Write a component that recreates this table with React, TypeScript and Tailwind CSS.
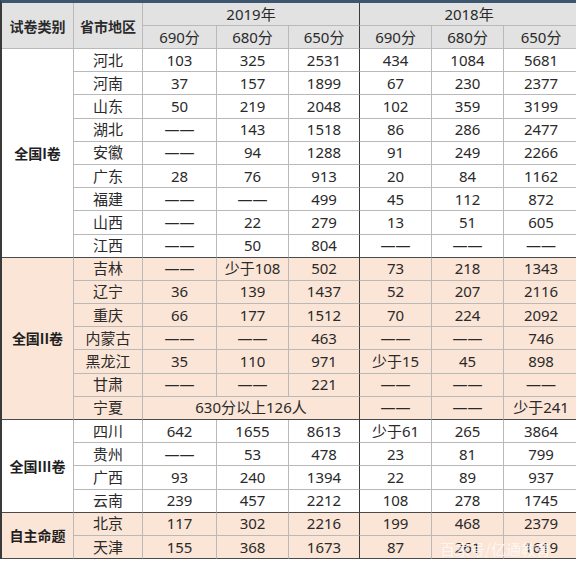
const DASH = "——";

type Row = { region: string; cells: string[]; span?: string };
type Section = { label: string; peach: boolean; rows: Row[] };

const sections: Section[] = [
  {
    label: "全国I卷",
    peach: false,
    rows: [
      { region: "河北", cells: ["103", "325", "2531", "434", "1084", "5681"] },
      { region: "河南", cells: ["37", "157", "1899", "67", "230", "2377"] },
      { region: "山东", cells: ["50", "219", "2048", "102", "359", "3199"] },
      { region: "湖北", cells: [DASH, "143", "1518", "86", "286", "2477"] },
      { region: "安徽", cells: [DASH, "94", "1288", "91", "249", "2266"] },
      { region: "广东", cells: ["28", "76", "913", "20", "84", "1162"] },
      { region: "福建", cells: [DASH, DASH, "499", "45", "112", "872"] },
      { region: "山西", cells: [DASH, "22", "279", "13", "51", "605"] },
      { region: "江西", cells: [DASH, "50", "804", DASH, DASH, DASH] },
    ],
  },
  {
    label: "全国II卷",
    peach: true,
    rows: [
      { region: "吉林", cells: [DASH, "少于108", "502", "73", "218", "1343"] },
      { region: "辽宁", cells: ["36", "139", "1437", "52", "207", "2116"] },
      { region: "重庆", cells: ["66", "177", "1512", "70", "224", "2092"] },
      { region: "内蒙古", cells: [DASH, DASH, "463", DASH, DASH, "746"] },
      { region: "黑龙江", cells: ["35", "110", "971", "少于15", "45", "898"] },
      { region: "甘肃", cells: [DASH, DASH, "221", DASH, DASH, DASH] },
      { region: "宁夏", span: "630分以上126人", cells: [DASH, DASH, "少于241"] },
    ],
  },
  {
    label: "全国III卷",
    peach: false,
    rows: [
      { region: "四川", cells: ["642", "1655", "8613", "少于61", "265", "3864"] },
      { region: "贵州", cells: [DASH, "53", "478", "23", "81", "799"] },
      { region: "广西", cells: ["93", "240", "1394", "22", "89", "937"] },
      { region: "云南", cells: ["239", "457", "2212", "108", "278", "1745"] },
    ],
  },
  {
    label: "自主命题",
    peach: true,
    rows: [
      { region: "北京", cells: ["117", "302", "2216", "199", "468", "2379"] },
      { region: "天津", cells: ["155", "368", "1673", "87", "261", "1619"] },
    ],
  },
];

const widths = [72, 69, 74, 72, 71, 72, 72, 74];
const cell = "border-r border-b border-[#b9b9b9] text-center align-middle p-0 whitespace-nowrap";

export default function App() {
  return (
    <div className="relative w-[576px] h-[563px] bg-white overflow-hidden text-[#2a2a2a] [font-family:'Noto_Sans','Noto_Sans_CJK_SC',sans-serif] text-[15px] leading-none">
      <table className="table-fixed border-separate border-spacing-0 w-[576px] border-t-[3px] border-t-[#3d5670] border-l-2 border-l-[#3a3a3a]">
        <colgroup>
          {widths.map((w, i) => (
            <col key={i} style={{ width: w }} />
          ))}
        </colgroup>
        <thead>
          <tr className="h-[23px] bg-[#e2e2e2]">
            <th rowSpan={2} className={`${cell} font-bold text-[14px] [font-family:'Noto_Sans_CJK_SC',sans-serif]`}>
              试卷类别
            </th>
            <th rowSpan={2} className={`${cell} font-bold text-[14px] [font-family:'Noto_Sans_CJK_SC',sans-serif]`}>
              省市地区
            </th>
            <th colSpan={3} className={`${cell} font-normal border-r-[#3a3a3a]`}>
              2019年
            </th>
            <th colSpan={3} className={`${cell} font-normal border-r-0`}>
              2018年
            </th>
          </tr>
          <tr className="h-[23px] bg-[#e2e2e2]">
            <th className={`${cell} font-normal`}>690分</th>
            <th className={`${cell} font-normal`}>680分</th>
            <th className={`${cell} font-normal border-r-[#3a3a3a]`}>650分</th>
            <th className={`${cell} font-normal`}>690分</th>
            <th className={`${cell} font-normal`}>680分</th>
            <th className={`${cell} font-normal border-r-0`}>650分</th>
          </tr>
        </thead>
        <tbody>
          {sections.map((s) =>
            s.rows.map((r, i) => {
              const last = i === s.rows.length - 1;
              const bottom = last ? "border-b-[#4a4a4a]" : "";
              return (
                <tr key={r.region} className={`h-[23.2px] ${s.peach ? "bg-[#fbe5d7]" : "bg-white"}`}>
                  {i === 0 && (
                    <td
                      rowSpan={s.rows.length}
                      className={`${cell} border-b-[#4a4a4a] font-bold text-[14px] text-[#1f1f1f] [font-family:'Noto_Sans_CJK_SC',sans-serif]`}
                    >
                      {s.label}
                    </td>
                  )}
                  <td className={`${cell} ${bottom}`}>{r.region}</td>
                  {r.span && (
                    <td colSpan={3} className={`${cell} ${bottom} border-r-[#3a3a3a]`}>
                      {r.span}
                    </td>
                  )}
                  {r.cells.map((c, j) => {
                    const col = r.span ? j + 3 : j;
                    const right = col === 2 ? "border-r-[#3a3a3a]" : col === 5 ? "border-r-0" : "";
                    return (
                      <td key={j} className={`${cell} ${bottom} ${right}`}>
                        {c}
                      </td>
                    );
                  })}
                </tr>
              );
            })
          )}
        </tbody>
      </table>
      <div className="absolute left-[440px] top-[541px] text-[15px] text-white/70 [font-family:'Noto_Sans_CJK_SC',sans-serif]">
        百家号/亿通教育
      </div>
    </div>
  );
}
